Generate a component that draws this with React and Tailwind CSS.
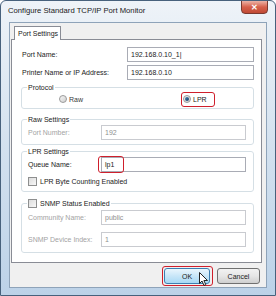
import React from 'react';

const Radio = ({ checked }) => (
  <span className="w-[8px] h-[8px] rounded-full border border-[#9a9a9a] bg-gradient-to-br from-[#f6f6f6] to-[#cfcfcf] flex items-center justify-center shrink-0">
    {checked && <span className="w-[4px] h-[4px] rounded-full bg-gradient-to-br from-[#4a86b8] to-[#163d63]" />}
  </span>
);

const Check = () => (
  <span className="w-[9px] h-[9px] border border-[#8e8f8f] bg-gradient-to-br from-[#dcdcdc] to-[#f8f8f8] shrink-0" />
);

const Field = ({ value, disabled, className = '' }) => (
  <div
    className={`h-[15px] border bg-white flex items-center pl-[3px] ${
      disabled ? 'border-[#c9cbd0] text-[#8f8f8f]' : 'border-[#a9acb5] text-[#1b1b1b]'
    } ${className}`}
  >
    {value}
  </div>
);

const Group = ({ legend, className = '', children }) => (
  <fieldset className={`border border-[#d5dfe5] rounded-[3px] pl-[6px] pr-[7px] ${className}`}>
    <legend className="px-[1px] -ml-[1px] h-[9px] leading-[9px] text-[#1b1b1b]">{legend}</legend>
    {children}
  </fieldset>
);

const Cursor = () => (
  <svg width="10" height="15" viewBox="0 0 10 15" className="absolute left-[35px] top-[4px]">
    <path d="M0.5 0.5 L0.5 11.5 L3 9 L5 13.5 L6.8 12.7 L4.9 8.5 L8.5 8.5 Z" fill="#fff" stroke="#222" strokeWidth="1" strokeLinejoin="round" />
  </svg>
);

export default function App() {
  return (
    <div className="w-[276px] h-[296px] border border-[#47617c] rounded-t-[6px] bg-gradient-to-b from-[#eef3f8] via-[#d3e1ef] to-[#bcd2e8] flex flex-col px-[8px] pb-[7px] font-['Liberation_Sans',Arial,sans-serif] text-[7px] leading-[9px] overflow-hidden">
      {/* Title bar */}
      <div className="h-[21px] flex items-start justify-between shrink-0">
        <span className="-ml-[1px] mt-[5px] text-[7.7px] leading-[10px] text-[#1a1a1a]">
          Configure Standard TCP/IP Port Monitor
        </span>
        <div className="-mt-px -mr-[1px] w-[27px] h-[14px] rounded-b-[4px] border border-[#7a3a30] bg-gradient-to-b from-[#eab2a6] via-[#d6604b] to-[#c04a34] flex items-center justify-center text-white text-[8px] font-bold">
          ✕
        </div>
      </div>

      {/* Client area */}
      <div className="flex-1 bg-[#f0f0f0] border border-[#8ea3b9] flex flex-col pt-[3px]">
        <div className="relative z-10 ml-[4px] w-[47px] h-[14px] bg-white border border-b-0 border-[#898c95] pl-[3px] pt-[2px] text-[#1b1b1b]">
          Port Settings
        </div>

        <div className="-mt-px ml-[1px] w-[251px] h-[224px] bg-white border border-[#898c95] pl-[9px] pr-[7px] pt-[7px] text-[#1b1b1b]">
          <div className="flex items-center">
            <span className="w-[106px] pl-[1px]">Port Name:</span>
            <Field value="192.168.0.10_1|" className="flex-1" />
          </div>
          <div className="flex items-center mt-[3px]">
            <span className="w-[106px] pl-[1px]">Printer Name or IP Address:</span>
            <Field value="192.168.0.10" className="flex-1" />
          </div>

          <Group legend="Protocol" className="mt-[3px] pb-[4px]">
            <div className="h-[10px] mt-[2px] flex items-center">
              <span className="ml-[31px] flex items-center gap-[2px] text-[#3a3a3a]">
                <Radio />
                <span>Raw</span>
              </span>
              <span className="relative ml-[100px] flex items-center gap-[2px]">
                <Radio checked />
                <span>LPR</span>
                <span className="absolute -left-[2px] -top-[3px] w-[34px] h-[15px] border-[1.5px] border-[#cf1f2c] rounded-[3px]" />
              </span>
            </div>
          </Group>

          <Group legend="Raw Settings" className="mt-[6px] pb-[4px]">
            <div className="flex items-center mt-[1px]">
              <span className="w-[73px] text-[#a3a3a3]">Port Number:</span>
              <Field value="192" disabled className="flex-1" />
            </div>
          </Group>

          <Group legend="LPR Settings" className="mt-[2px] pb-[5px]">
            <div className="flex items-center mt-[1px]">
              <span className="w-[73px]">Queue Name:</span>
              <div className="relative flex-1">
                <Field value="lp1" />
                <span className="absolute -left-[3px] -top-[1px] w-[26px] h-[17px] border-[1.5px] border-[#cf1f2c] rounded-[3px]" />
              </div>
            </div>
            <div className="h-[10px] mt-[4px] flex items-center gap-[3px]">
              <Check />
              <span>LPR Byte Counting Enabled</span>
            </div>
          </Group>

          <fieldset className="mt-[6px] border border-[#d5dfe5] rounded-[3px] pl-[6px] pr-[7px] pb-[5px]">
            <legend className="px-[1px] -ml-[1px] h-[10px] flex items-center gap-[3px]">
              <Check />
              <span>SNMP Status Enabled</span>
            </legend>
            <div className="flex items-center mt-[2px]">
              <span className="w-[73px] text-[#a3a3a3]">Community Name:</span>
              <Field value="public" disabled className="flex-1" />
            </div>
            <div className="flex items-center mt-[7px]">
              <span className="w-[73px] text-[#a3a3a3]">SNMP Device Index:</span>
              <Field value="1" disabled className="flex-1" />
            </div>
          </fieldset>
        </div>

        {/* Buttons */}
        <div className="flex justify-end gap-[7px] mt-[5px] pr-[6px]">
          <div className="relative">
            <div className="w-[46px] h-[16px] rounded-[3px] border border-[#3c7fb1] bg-gradient-to-b from-[#eaf6fd] via-[#c8e6f8] to-[#a7d9f5] flex items-center justify-center text-[#1b1b1b]">
              OK
            </div>
            <span className="absolute -left-[2px] -top-[2px] w-[51px] h-[20px] border-[1.5px] border-[#cf1f2c] rounded-[3px]" />
            <Cursor />
          </div>
          <div className="w-[43px] h-[16px] rounded-[3px] border border-[#707070] bg-gradient-to-b from-[#f2f2f2] via-[#e6e6e6] to-[#cfcfcf] flex items-center justify-center text-[#1b1b1b]">
            Cancel
          </div>
        </div>
      </div>
    </div>
  );
}
